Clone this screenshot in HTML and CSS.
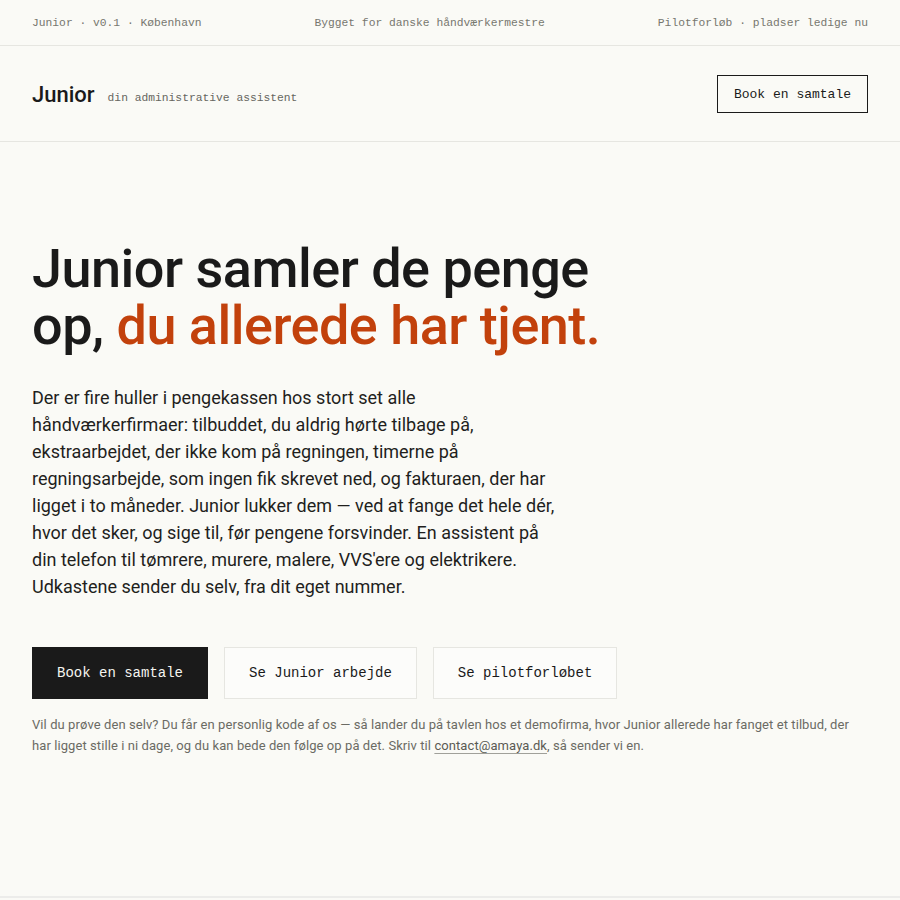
FILE: index.html
```html
<!DOCTYPE html>
<html lang="da">
<head>
<meta charset="utf-8">
<title>Junior — din administrative assistent</title>
<link rel="stylesheet" href="styles.css">
</head>
<body>
<div class="page">
  <div class="topbar">
    <span>Junior · v0.1 · København</span>
    <span>Bygget for danske håndværkermestre</span>
    <span>Pilotforløb · pladser ledige nu</span>
  </div>
  <header class="header">
    <div class="brand">
      <span class="logo">Junior</span>
      <span class="tagline">din administrative assistent</span>
    </div>
    <a class="btn btn-outline" href="#">Book en samtale</a>
  </header>
  <main class="hero">
    <h1 class="headline">Junior samler de penge<br>op, <span class="accent">du allerede har tjent.</span></h1>
    <p class="lead">Der er fire huller i pengekassen hos stort set alle<br>håndværkerfirmaer: tilbuddet, du aldrig hørte tilbage på,<br>ekstraarbejdet, der ikke kom på regningen, timerne på<br>regningsarbejde, som ingen fik skrevet ned, og fakturaen, der har<br>ligget i to måneder. Junior lukker dem — ved at fange det hele dér,<br>hvor det sker, og sige til, før pengene forsvinder. En assistent på<br>din telefon til tømrere, murere, malere, VVS'ere og elektrikere.<br>Udkastene sender du selv, fra dit eget nummer.</p>
    <div class="actions">
      <a class="btn btn-primary" href="#">Book en samtale</a>
      <a class="btn btn-ghost" href="#">Se Junior arbejde</a>
      <a class="btn btn-ghost" href="#">Se pilotforløbet</a>
    </div>
    <p class="note">Vil du prøve den selv? Du får en personlig kode af os — så lander du på tavlen hos et demofirma, hvor Junior allerede har fanget et tilbud, der<br>har ligget stille i ni dage, og du kan bede den følge op på det. Skriv til <a href="#">contact@amaya.dk</a>, så sender vi en.</p>
  </main>
</div>
</body>
</html>
```
FILE: styles.css
```css
* { box-sizing: border-box; }
html, body { margin: 0; padding: 0; }
body {
  background: #fafaf6;
  color: #1a1a1a;
  font-family: Roboto, "Liberation Sans", sans-serif;
}
.page {
  min-height: 898px;
  border-bottom: 2px solid #ececea;
}
.topbar {
  display: flex;
  justify-content: space-between;
  align-items: center;
  height: 46px;
  padding: 0 32px;
  border-bottom: 1px solid #e6e6e1;
  font-family: "Liberation Mono", monospace;
  font-size: 11.3px;
  color: #77776f;
}
.header {
  display: flex;
  justify-content: space-between;
  align-items: center;
  padding: 29px 32px 28px;
  border-bottom: 1px solid #e6e6e1;
}
.brand { display: flex; align-items: baseline; gap: 13px; }
.logo { font-size: 22px; font-weight: 500; color: #1a1a1a; }
.tagline {
  font-family: "Liberation Mono", monospace;
  font-size: 11.3px;
  color: #66665f;
  position: relative;
  top: -1px;
}
.btn {
  display: inline-flex;
  align-items: center;
  justify-content: center;
  font-family: "Liberation Mono", monospace;
  text-decoration: none;
  color: #1a1a1a;
}
.btn-outline {
  height: 38px;
  padding: 0 16px;
  border: 1px solid #1a1a1a;
  font-size: 13px;
}
.hero { padding: 98px 32px 0; }
.headline {
  margin: 0;
  font-size: 54px;
  line-height: 57px;
  font-weight: 500;
  letter-spacing: -0.5px;
  color: #1a1a1a;
}
.accent { color: #c2410c; }
.lead {
  margin: 30px 0 0;
  font-size: 18px;
  line-height: 27px;
  color: #1f1f1d;
}
.actions { display: flex; gap: 16px; margin-top: 47px; }
.btn-primary, .btn-ghost { height: 52px; padding: 0 24px; font-size: 14px; }
.btn-primary { background: #1a1a1a; color: #f5f5f0; border: 1px solid #1a1a1a; }
.btn-ghost { background: #fcfcfa; border: 1px solid #e6e6e1; }
.note {
  margin: 15px 0 0;
  font-size: 13px;
  line-height: 21px;
  letter-spacing: 0.08px;
  color: #6b6b64;
  white-space: nowrap;
}
.note a { color: #5a5a54; text-decoration: underline; text-decoration-color: #a0a09a; text-underline-offset: 3px; }
```
